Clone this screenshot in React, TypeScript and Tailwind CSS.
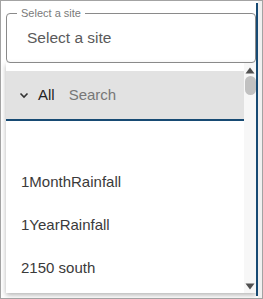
export default function App() {
  const sites = ["1MonthRainfall", "1YearRainfall", "2150 south"];
  return (
    <div className="flex h-[299px] w-[263px] overflow-hidden border border-[#a3a3a3] bg-white font-['Liberation_Sans',Arial,sans-serif]">
      <div className="flex flex-1 flex-col pl-[5px] pt-[12px]">
        {/* outlined select */}
        <div className="relative flex h-[50px] items-center rounded-[4px] border border-[#8a8a8a] pl-[20px] text-[15.5px] text-[#5a5a5a]">
          <span className="absolute -top-[8px] left-[10px] bg-white px-[4px] text-[11px] leading-[14px] text-[#7a7a7a]">
            Select a site
          </span>
          Select a site
        </div>

        {/* dropdown menu */}
        <div className="flex h-[230px] bg-white shadow-[0_2px_5px_rgba(0,0,0,0.3)]">
          <div className="flex flex-1 flex-col pt-[8px]">
            <div className="flex h-[50px] items-center border-b-2 border-[#174a73] bg-[#e2e2e2] pl-[13px] text-[15px]">
              <svg width="10" height="10" viewBox="0 0 10 10" className="mr-[9px]">
                <path d="M1.5 3.5 L5 7 L8.5 3.5" fill="none" stroke="#333" strokeWidth="1.6" />
              </svg>
              <span className="text-[#222]">All</span>
              <span className="ml-[14px] text-[#777]">Search</span>
            </div>
            <div className="h-[40px]" />
            {sites.map((s) => (
              <div key={s} className="flex h-[43px] items-center pl-[15px] text-[15px] text-[#3a3a3a]">
                {s}
              </div>
            ))}
          </div>

          {/* scrollbar */}
          <div className="flex w-[12px] flex-col items-center bg-[#f7f7f7] pt-[4px] pb-[3px]">
            <svg width="10" height="7" viewBox="0 0 10 7">
              <path d="M5 0.5 L9.5 6.5 L0.5 6.5 Z" fill="#505050" />
            </svg>
            <div className="mt-[2px] h-[19px] w-[11px] rounded-full bg-[#c1c1c1]" />
            <div className="flex-1" />
            <svg width="10" height="7" viewBox="0 0 10 7">
              <path d="M0.5 0.5 L9.5 0.5 L5 6.5 Z" fill="#505050" />
            </svg>
          </div>
        </div>
      </div>
      <div className="my-[2px] w-[2px] bg-[#174a73]" />
      <div className="w-[4px] bg-[#f0f0f0]" />
    </div>
  );
}
